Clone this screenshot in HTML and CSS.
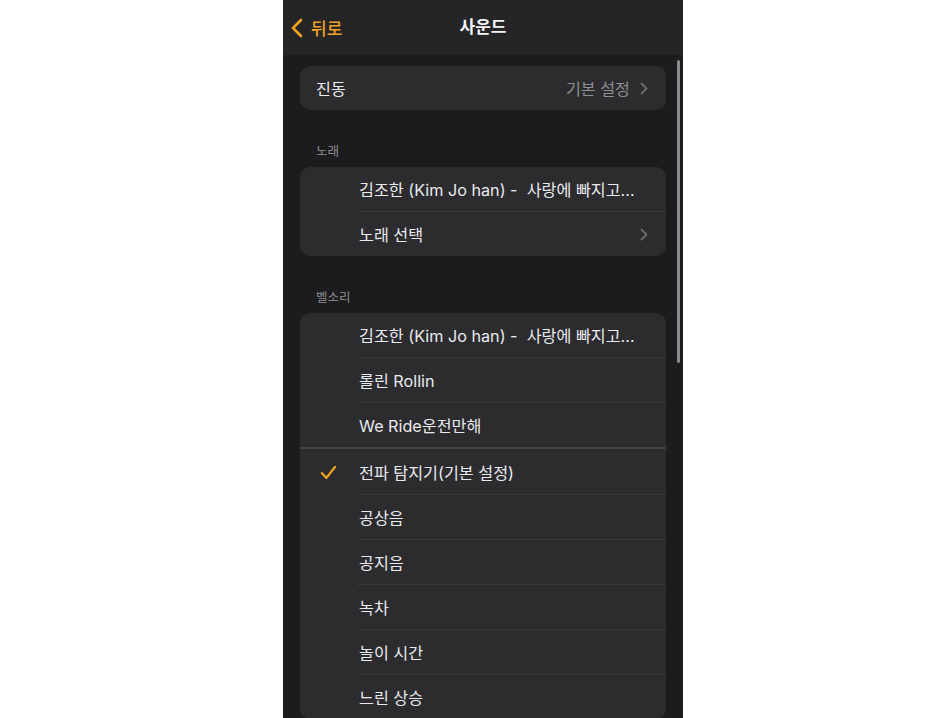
FILE: index.html
```html
<!DOCTYPE html>
<html lang="ko">
<head>
<meta charset="utf-8">
<title>사운드</title>
<link rel="stylesheet" href="styles.css">
</head>
<body>
<div class="phone">
  <header class="nav">
    <div class="back">
      <svg class="back-chev" width="12" height="20" viewBox="0 0 12 20"><polyline points="10,2 2,10 10,18" fill="none" stroke="#f0a022" stroke-width="2.6" stroke-linecap="round" stroke-linejoin="round"/></svg>
      <span>뒤로</span>
    </div>
    <div class="title">사운드</div>
  </header>
  <main class="content">
    <div class="scrollbar"></div>
    <div class="card">
      <div class="row plain">
        <span class="label">진동</span>
        <span class="value">기본 설정</span>
        <svg class="chev" width="8" height="13" viewBox="0 0 8 13"><polyline points="1.5,1.5 6.5,6.5 1.5,11.5" fill="none" stroke="#6c6c70" stroke-width="1.8" stroke-linecap="round" stroke-linejoin="round"/></svg>
      </div>
    </div>

    <div class="section">노래</div>
    <div class="card">
      <div class="row"><span class="check"></span><span class="label">김조한 (Kim Jo han) -&nbsp; 사랑에 빠지고...</span></div>
      <div class="sep"></div>
      <div class="row"><span class="check"></span><span class="label">노래 선택</span>
        <svg class="chev" width="8" height="13" viewBox="0 0 8 13"><polyline points="1.5,1.5 6.5,6.5 1.5,11.5" fill="none" stroke="#6c6c70" stroke-width="1.8" stroke-linecap="round" stroke-linejoin="round"/></svg>
      </div>
    </div>

    <div class="section">벨소리</div>
    <div class="card">
      <div class="row"><span class="check"></span><span class="label">김조한 (Kim Jo han) -&nbsp; 사랑에 빠지고...</span></div>
      <div class="sep"></div>
      <div class="row"><span class="check"></span><span class="label">롤린 Rollin</span></div>
      <div class="sep"></div>
      <div class="row"><span class="check"></span><span class="label">We Ride운전만해</span></div>
      <div class="sep-thick"></div>
      <div class="row"><span class="check">
        <svg width="17" height="15" viewBox="0 0 17 15"><polyline points="1.8,8 6.3,13 15.2,1.8" fill="none" stroke="#f0a022" stroke-width="2.2" stroke-linecap="round" stroke-linejoin="round"/></svg>
      </span><span class="label">전파 탐지기(기본 설정)</span></div>
      <div class="sep"></div>
      <div class="row"><span class="check"></span><span class="label">공상음</span></div>
      <div class="sep"></div>
      <div class="row"><span class="check"></span><span class="label">공지음</span></div>
      <div class="sep"></div>
      <div class="row"><span class="check"></span><span class="label">녹차</span></div>
      <div class="sep"></div>
      <div class="row"><span class="check"></span><span class="label">놀이 시간</span></div>
      <div class="sep"></div>
      <div class="row"><span class="check"></span><span class="label">느린 상승</span></div>
    </div>
  </main>
</div>
</body>
</html>
```

FILE: styles.css
```css
html, body {
  margin: 0;
  padding: 0;
  background: #ffffff;
}
body {
  font-family: "Inter", "Noto Sans CJK KR", sans-serif;
}
.phone {
  width: 400px;
  height: 718px;
  margin-left: 283px;
  background: #1c1c1e;
  overflow: hidden;
  display: flex;
  flex-direction: column;
}
.nav {
  height: 55px;
  flex: none;
  background: #252527;
  position: relative;
  display: flex;
  align-items: center;
  justify-content: center;
}
.back {
  position: absolute;
  left: 8px;
  top: 15px;
  display: flex;
  align-items: center;
  gap: 8px;
  color: #f0a022;
  font-size: 17px;
  font-weight: 500;
}
.title {
  color: #f2f2f7;
  font-size: 17px;
  font-weight: 700;
  margin-top: -4px;
}
.content {
  position: relative;
  flex: 1;
  padding: 11px 17px 0 17px;
}
.scrollbar {
  position: absolute;
  right: 3px;
  top: 5px;
  width: 3px;
  height: 303px;
  border-radius: 2px;
  background: #8a8a8e;
}
.card {
  background: #2c2c2e;
  border-radius: 10px;
  overflow: hidden;
}
.row {
  height: 44px;
  display: flex;
  align-items: center;
  color: #e9e9ee;
  font-size: 16.2px;
}
.row.plain {
  padding: 0 18px 0 16px;
}
.row .check {
  width: 59px;
  flex: none;
  display: flex;
  justify-content: flex-start;
  padding-left: 20px;
  box-sizing: border-box;
}
.row .label {
  flex: 1;
  white-space: nowrap;
}
.row .value {
  color: #8e8e93;
  margin-right: 10px;
}
.row > .chev {
  margin-right: 18px;
}
.row.plain > .chev {
  margin-right: 0;
}
.sep {
  height: 1px;
  margin-left: 57px;
  background: #38383a;
}
.sep-thick {
  height: 2px;
  margin-bottom: 1px;
  background: #414144;
}
.section {
  margin: 34px 0 7px 16px;
  height: 16px;
  line-height: 16px;
  font-size: 12.5px;
  color: #8d8d92;
}
```
